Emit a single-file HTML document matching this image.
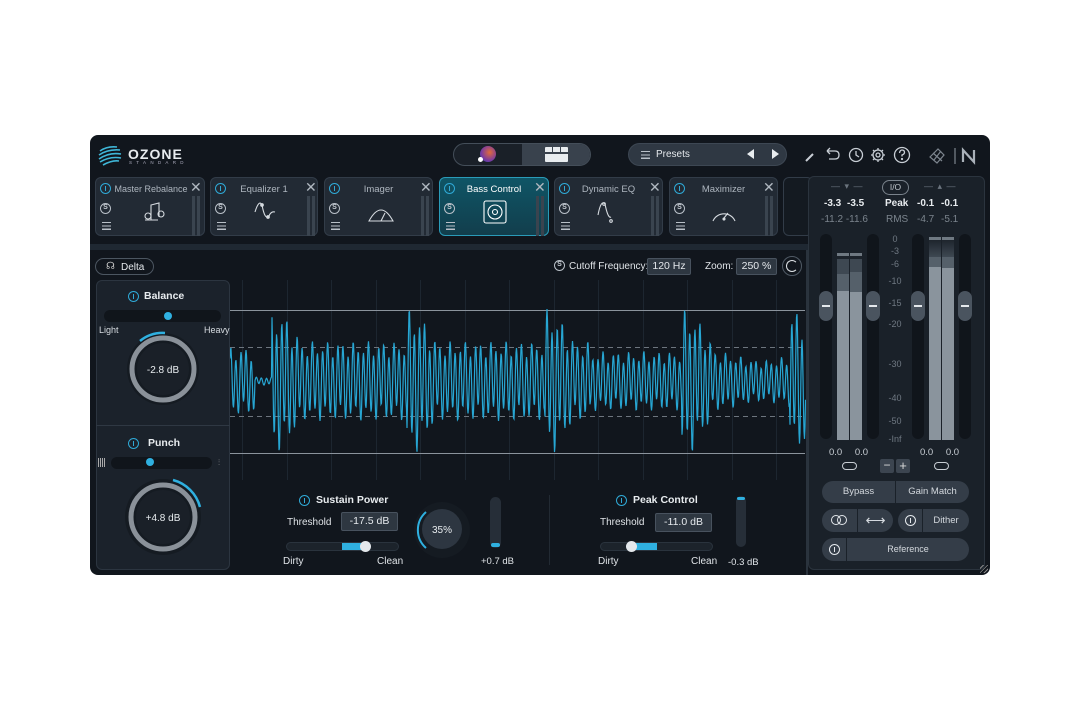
<!DOCTYPE html>
<html><head><meta charset="utf-8"><style>
*{box-sizing:border-box;margin:0;padding:0}
body{width:1080px;height:710px;background:#fff;font-family:"Liberation Sans",sans-serif;position:relative;overflow:hidden;color:#d8dde3}
.a{position:absolute}
#win{left:90px;top:135px;width:900px;height:440px;background:#11161d;border-radius:8px;overflow:hidden}
.card{position:absolute;top:177px;height:59px;background:#222a34;border:1px solid #323c48;border-radius:6px}
.card .t{position:absolute;top:6px;left:0;right:0;text-align:center;font-size:9.5px;color:#aeb6bf}
.pw{position:absolute;width:11px;height:11px;border:1.3px solid #2fa9d6;border-radius:50%}
.pw:after{content:"";position:absolute;left:3.5px;top:2px;width:1.3px;height:4.5px;background:#2fa9d6}
.s{position:absolute;width:11px;height:11px;border:1.2px solid #b9c0c8;border-radius:50%;font-size:7px;line-height:8.5px;text-align:center;color:#c8ced5;font-weight:bold}
.ls{position:absolute;width:9px;height:8px;background:repeating-linear-gradient(#b9c0c8 0 1.2px,transparent 1.2px 3.3px)}
.x{position:absolute;font-size:14px;color:#b0b8c0;line-height:12px}
.vm{position:absolute;width:3px;height:40px;background:#3a444f}
.box{position:absolute;background:#2e3741;border:1px solid #48525e;border-radius:2px;font-size:10.5px;text-align:center;color:#e4e8ec}
.lbl{position:absolute;font-size:10px;color:#e0e4e8}
.btn{position:absolute;background:#343d48;font-size:9.5px;color:#d4d9de;text-align:center}
.sc{position:absolute;left:880px;width:30px;text-align:center;font-size:9px;color:#6f7882}
</style></head><body>
<div id="win" class="a"></div>
<svg class="a" style="left:97px;top:143px" width="26" height="24" viewBox="0 0 26 24"><g stroke="#3fb7d8" stroke-width="1.6" fill="none"><path d="M3 8 Q10 3 20 4"/><path d="M2 12 Q11 6 23 7"/><path d="M2 16 Q12 9 24 11"/><path d="M3 19 Q13 13 24 15"/><path d="M6 22 Q15 17 22 18"/></g></svg>
<div class="a" style="left:128px;top:146px;font-size:14px;font-weight:bold;color:#e8ecef;letter-spacing:1px">OZONE</div>
<div class="a" style="left:129px;top:160px;font-size:4.5px;color:#aab;letter-spacing:4.3px">STANDARD</div>
<div class="a" style="left:453px;top:143px;width:138px;height:23px;border-radius:12px;background:#1a2028;border:1px solid #444e59;overflow:hidden"><div class="a" style="left:68px;top:0;width:70px;height:23px;background:#39424d"></div></div>
<div class="a" style="left:480px;top:146px;width:16px;height:16px;border-radius:50%;background:radial-gradient(circle at 60% 40%,#e06a3a,#7a3aa0 60%,#2a4ab0)"></div>
<div class="a" style="left:478px;top:157px;width:5px;height:5px;border-radius:50%;background:#fff"></div>
<div class="a" style="left:545px;top:147px;width:23px;height:15px;background:#e8ecef;border-radius:1px;border-top:5px solid #e8ecef"><div class="a" style="left:7px;top:-5px;width:1px;height:5px;background:#39424d"></div><div class="a" style="left:15px;top:-5px;width:1px;height:5px;background:#39424d"></div><div class="a" style="left:-1px;top:0;width:25px;height:1.5px;background:#39424d"></div></div>
<div class="a" style="left:628px;top:143px;width:159px;height:23px;border-radius:12px;background:#2f3843;border:1px solid #3d4753"></div>
<div class="ls" style="left:641px;top:151px"></div>
<div class="a" style="left:656px;top:149px;font-size:10px;color:#e4e8ec">Presets</div>
<div class="a" style="left:747px;top:149px;width:0;height:0;border-top:5px solid transparent;border-bottom:5px solid transparent;border-right:7px solid #e8ecef"></div>
<div class="a" style="left:772px;top:149px;width:0;height:0;border-top:5px solid transparent;border-bottom:5px solid transparent;border-left:7px solid #e8ecef"></div>
<svg class="a" style="left:803px;top:145px" width="110" height="22" viewBox="0 0 110 22" fill="none" stroke="#c8ced5" stroke-width="1.3"><path d="M3 16 L10 9" stroke-width="2"/><path d="M24 6 H32 Q36 6 36 10 Q36 14 32 14 H26"/><path d="M24 6 L27 3 M24 6 L27 9"/><circle cx="53" cy="10" r="6.5"/><path d="M53 6 V10 L56 12"/><circle cx="75" cy="10" r="5"/><circle cx="75" cy="10" r="2"/><path d="M75 3v2M75 15v2M68 10h2M80 10h2M70 5l1.5 1.5M80 15l-1.5-1.5M70 15l1.5-1.5M80 5l-1.5 1.5"/><circle cx="99" cy="10" r="7.5"/><path d="M96.5 8 Q97 5 99 5 Q101.5 5 101.5 7.5 Q101.5 9 99 10 V11.5"/><circle cx="99" cy="14" r="0.5"/></svg>
<svg class="a" style="left:928px;top:145px" width="56" height="22" viewBox="0 0 56 22" fill="none" stroke="#7d858e" stroke-width="1.2"><path d="M2 12 L10 4 L16 10 L9 18 Z M5 8 L14 16 M6 15 L13 6"/><path d="M27 3 V19"/><path d="M35 17 V5 L46 17 V5" stroke="#aab1b9" stroke-width="2.2"/></svg>
<div class="card" style="left:95px;width:110px"><div class="t" style="left:14px;right:12px;font-size:9px">Master Rebalance</div></div>
<div class="card" style="left:210px;width:108px"><div class="t">Equalizer 1</div></div>
<div class="card" style="left:324px;width:109px"><div class="t">Imager</div></div>
<div class="card" style="left:439px;width:110px;background:linear-gradient(#0f5566,#123e4c);border-color:#2a9bb8"><div class="t" style="color:#fff">Bass Control</div></div>
<div class="card" style="left:554px;width:109px"><div class="t">Dynamic EQ</div></div>
<div class="card" style="left:669px;width:109px"><div class="t">Maximizer</div></div>
<div class="card" style="left:783px;width:30px;background:#141a21"></div>
<div class="pw" style="left:100px;top:183px"></div><div class="pw" style="left:215px;top:183px"></div><div class="pw" style="left:329px;top:183px"></div><div class="pw" style="left:444px;top:183px"></div><div class="pw" style="left:559px;top:183px"></div><div class="pw" style="left:674px;top:183px"></div>
<div class="s" style="left:100px;top:203px">S</div><div class="s" style="left:215px;top:203px">S</div><div class="s" style="left:329px;top:203px">S</div><div class="s" style="left:444px;top:203px">S</div><div class="s" style="left:559px;top:203px">S</div><div class="s" style="left:674px;top:203px">S</div>
<div class="ls" style="left:102px;top:222px"></div><div class="ls" style="left:217px;top:222px"></div><div class="ls" style="left:331px;top:222px"></div><div class="ls" style="left:446px;top:222px"></div><div class="ls" style="left:561px;top:222px"></div><div class="ls" style="left:676px;top:222px"></div>
<div class="x" style="left:190px;top:181px">✕</div><div class="x" style="left:305px;top:181px">✕</div><div class="x" style="left:420px;top:181px">✕</div><div class="x" style="left:534px;top:181px">✕</div><div class="x" style="left:649px;top:181px">✕</div><div class="x" style="left:763px;top:181px">✕</div>
<div class="vm" style="left:192px;top:196px"></div><div class="vm" style="left:197px;top:196px"></div>
<div class="vm" style="left:307px;top:196px"></div><div class="vm" style="left:312px;top:196px"></div>
<div class="vm" style="left:421px;top:196px"></div><div class="vm" style="left:426px;top:196px"></div>
<div class="vm" style="left:536px;top:196px"></div><div class="vm" style="left:541px;top:196px"></div>
<div class="vm" style="left:651px;top:196px"></div><div class="vm" style="left:656px;top:196px"></div>
<div class="vm" style="left:765px;top:196px"></div><div class="vm" style="left:770px;top:196px"></div>
<svg class="a" style="left:95px;top:177px" width="700" height="60" fill="none" stroke="#d6dbe0" stroke-width="1.1">
<path d="M50 43 H63 M56 43 V28 L64 26 V40"/><circle cx="53" cy="39" r="3"/><circle cx="66" cy="37" r="3"/>
<path d="M160 35 Q164 22 167 28 Q170 44 174 39 Q176 34 180 35"/><circle cx="167" cy="28" r="1.3" fill="#d6dbe0"/><circle cx="173" cy="40" r="1.3" fill="#d6dbe0"/>
<path d="M274 44 Q286 22 298 44 Z M286 44 L290 36"/>
<rect x="389" y="24" width="22" height="22" rx="2" stroke="#fff"/><circle cx="400" cy="35" r="7" stroke="#fff"/><circle cx="400" cy="35" r="2.5" stroke="#fff"/>
<path d="M503 38 Q506 22 510 27 Q513 42 516 40"/><circle cx="509" cy="27" r="1.3"/><circle cx="516" cy="44" r="1.3"/>
<path d="M618 44 A12 12 0 0 1 640 44 M629 41 L633 36"/><circle cx="629" cy="42" r="1" fill="#d6dbe0"/>
</svg>
<div class="a" style="left:90px;top:244px;width:718px;height:6px;background:#1f2832"></div>
<div class="a" style="left:95px;top:258px;width:59px;height:17px;border:1px solid #4c5661;border-radius:9px;font-size:10px;padding:3px 0 0 25px;color:#e4e8ec">Delta</div>
<div class="a" style="left:106px;top:261px;font-size:10px;color:#ccc">☊</div>
<div class="s" style="left:554px;top:260px">S</div>
<div class="lbl" style="left:569px;top:261px">Cutoff Frequency:</div>
<div class="box" style="left:647px;top:258px;width:44px;height:17px;line-height:15px">120 Hz</div>
<div class="lbl" style="left:705px;top:261px">Zoom:</div>
<div class="box" style="left:736px;top:258px;width:41px;height:17px;line-height:15px">250 %</div>
<div class="a" style="left:782px;top:256px;width:20px;height:20px;border-radius:50%;border:1px solid #505a65"></div>
<div class="a" style="left:786px;top:260px;width:12px;height:12px;border-radius:50%;border:1.4px solid #e0e4e8;border-right-color:transparent"></div>
<svg class="a" style="left:230px;top:280px" width="578" height="200" id="wv">
<g stroke="#1d2630" stroke-width="1"><path id="grid"/></g>
<path d="M0 30.5 H575 M0 173.5 H575" stroke="#8b939c" stroke-width="1"/>
<path d="M0 67.5 H575 M0 136.5 H575" stroke="#6d757e" stroke-width="1" stroke-dasharray="5 4"/>
<path id="wp" fill="none" stroke="#27a6d3" stroke-width="1.2"/>
</svg>
<div class="a" style="left:806px;top:250px;width:2px;height:325px;background:#2a333d"></div>
<div class="a" style="left:96px;top:280px;width:134px;height:290px;background:#1b222b;border:1px solid #2c3540;border-radius:6px"></div>
<div class="a" style="left:96px;top:425px;width:134px;height:1px;background:#2f3843"></div>
<div class="pw" style="left:128px;top:291px"></div><div class="a" style="left:144px;top:290px;font-size:10.5px;font-weight:bold;color:#e8ecef">Balance</div>
<div class="a" style="left:104px;top:310px;width:117px;height:12px;border-radius:6px;background:#10151b"></div>
<div class="a" style="left:164px;top:312px;width:8px;height:8px;border-radius:50%;background:#2fb0e0"></div>
<div class="a" style="left:99px;top:325px;font-size:9px;color:#d8dde2">Light</div><div class="a" style="left:204px;top:325px;font-size:9px;color:#d8dde2">Heavy</div>
<svg class="a" style="left:120px;top:326px" width="86" height="86"><circle cx="43" cy="43" r="36" fill="#151b22"/><circle cx="43" cy="43" r="31" fill="none" stroke="#8a9199" stroke-width="5"/><circle cx="43" cy="43" r="26" fill="#1a2028"/><path d="M20 15 A36 36 0 0 1 45 7" fill="none" stroke="#2fb0e0" stroke-width="2.5"/><text x="43" y="47" fill="#e8ecef" font-size="10" text-anchor="middle" font-family="Liberation Sans">-2.8 dB</text></svg>
<div class="pw" style="left:128px;top:438px"></div><div class="a" style="left:148px;top:437px;font-size:10.5px;font-weight:bold;color:#e8ecef">Punch</div>
<div class="a" style="left:98px;top:458px;width:8px;height:9px;background:repeating-linear-gradient(90deg,#aaa 0 1px,transparent 1px 2px)"></div>
<div class="a" style="left:111px;top:457px;width:101px;height:12px;border-radius:6px;background:#10151b"></div>
<div class="a" style="left:146px;top:458px;width:8px;height:8px;border-radius:50%;background:#2fb0e0"></div>
<div class="a" style="left:218px;top:458px;font-size:8px;color:#aaa">⫶</div>
<svg class="a" style="left:118px;top:472px" width="90" height="90"><circle cx="45" cy="45" r="38" fill="#151b22"/><circle cx="45" cy="45" r="32" fill="none" stroke="#8a9199" stroke-width="5"/><circle cx="45" cy="45" r="27" fill="#1a2028"/><path d="M55 8 A38 38 0 0 1 82 35" fill="none" stroke="#2fb0e0" stroke-width="2.5"/><text x="45" y="49" fill="#e8ecef" font-size="10" text-anchor="middle" font-family="Liberation Sans">+4.8 dB</text></svg>
<div class="pw" style="left:299px;top:495px"></div><div class="a" style="left:316px;top:494px;font-size:10.5px;font-weight:bold;color:#e8ecef">Sustain Power</div>
<div class="lbl" style="left:287px;top:517px">Threshold</div>
<div class="box" style="left:341px;top:512px;width:57px;height:19px;line-height:17px">-17.5 dB</div>
<div class="a" style="left:286px;top:542px;width:113px;height:9px;border-radius:5px;background:#1c232b;border:1px solid #2a333d"></div>
<div class="a" style="left:342px;top:543px;width:22px;height:7px;background:#2fb0e0"></div>
<div class="a" style="left:360px;top:541px;width:11px;height:11px;border-radius:50%;background:#e4e8ec"></div>
<div class="lbl" style="left:283px;top:556px">Dirty</div><div class="lbl" style="left:377px;top:556px">Clean</div>
<svg class="a" style="left:412px;top:500px" width="60" height="60"><circle cx="30" cy="30" r="28" fill="#151b22"/><circle cx="30" cy="29" r="20" fill="#2d3641"/><path d="M14 12 A24 24 0 0 0 14 48" fill="none" stroke="#2fb0e0" stroke-width="2"/><text x="30" y="33" fill="#e8ecef" font-size="10" text-anchor="middle" font-family="Liberation Sans">35%</text></svg>
<div class="a" style="left:490px;top:497px;width:11px;height:51px;border-radius:6px;background:#262e38"></div>
<div class="a" style="left:491px;top:543px;width:9px;height:4px;border-radius:3px;background:#2fb0e0"></div>
<div class="lbl" style="left:481px;top:556px;font-size:9.5px">+0.7 dB</div>
<div class="a" style="left:549px;top:495px;width:1px;height:70px;background:#222a33"></div>
<div class="pw" style="left:616px;top:495px"></div><div class="a" style="left:633px;top:494px;font-size:10.5px;font-weight:bold;color:#e8ecef">Peak Control</div>
<div class="lbl" style="left:600px;top:517px">Threshold</div>
<div class="box" style="left:655px;top:513px;width:57px;height:19px;line-height:17px">-11.0 dB</div>
<div class="a" style="left:600px;top:542px;width:113px;height:9px;border-radius:5px;background:#1c232b;border:1px solid #2a333d"></div>
<div class="a" style="left:631px;top:543px;width:26px;height:7px;background:#2fb0e0"></div>
<div class="a" style="left:626px;top:541px;width:11px;height:11px;border-radius:50%;background:#e4e8ec"></div>
<div class="lbl" style="left:598px;top:556px">Dirty</div><div class="lbl" style="left:691px;top:556px">Clean</div>
<div class="a" style="left:736px;top:496px;width:10px;height:51px;border-radius:6px;background:#262e38"></div>
<div class="a" style="left:737px;top:497px;width:8px;height:3px;border-radius:3px;background:#2fb0e0"></div>
<div class="lbl" style="left:728px;top:557px;font-size:9.5px">-0.3 dB</div>
<div class="a" style="left:808px;top:176px;width:177px;height:394px;background:#1a2129;border:1px solid #2b343e;border-radius:6px"></div>
<div class="a" style="left:831px;top:181px;font-size:9px;color:#6b747e;letter-spacing:1px">— ▾ —</div>
<div class="a" style="left:924px;top:181px;font-size:9px;color:#6b747e;letter-spacing:1px">— ▴ —</div>
<div class="a" style="left:882px;top:180px;width:27px;height:15px;border:1px solid #7a838c;border-radius:8px;font-size:8.5px;text-align:center;line-height:13px;color:#c0c6cc">I/O</div>
<div class="a" style="left:824px;top:198px;font-size:10px;font-weight:bold;color:#e8ecef;word-spacing:3px">-3.3 -3.5</div>
<div class="a" style="left:885px;top:198px;font-size:10px;font-weight:bold;color:#e8ecef">Peak</div>
<div class="a" style="left:917px;top:198px;font-size:10px;font-weight:bold;color:#e8ecef;word-spacing:4px">-0.1 -0.1</div>
<div class="a" style="left:821px;top:214px;font-size:10px;color:#7b848d">-11.2 -11.6</div>
<div class="a" style="left:886px;top:214px;font-size:10px;color:#7b848d">RMS</div>
<div class="a" style="left:917px;top:214px;font-size:10px;color:#7b848d;word-spacing:4px">-4.7 -5.1</div>
<div class="a" style="left:820px;top:234px;width:12px;height:205px;border-radius:6px;background:#10151b"></div>
<div class="a" style="left:867px;top:234px;width:12px;height:205px;border-radius:6px;background:#10151b"></div>
<div class="a" style="left:912px;top:234px;width:12px;height:205px;border-radius:6px;background:#10151b"></div>
<div class="a" style="left:959px;top:234px;width:12px;height:205px;border-radius:6px;background:#10151b"></div>
<div class="a" style="left:837px;top:253px;width:12px;height:187px;background:linear-gradient(#1c232b 0 6px,#3e4852 6px 21px,#55606a 21px 38px,#8a949d 38px)"></div>
<div class="a" style="left:850px;top:253px;width:12px;height:187px;background:linear-gradient(#1c232b 0 6px,#3e4852 6px 19px,#55606a 19px 39px,#8a949d 39px)"></div>
<div class="a" style="left:837px;top:253px;width:12px;height:3px;background:#6f7982"></div><div class="a" style="left:850px;top:253px;width:12px;height:3px;background:#6f7982"></div>
<div class="a" style="left:929px;top:237px;width:12px;height:203px;background:linear-gradient(#1c232b 0 2px,#3e4852 20px,#55606a 20px 30px,#8a949d 30px)"></div>
<div class="a" style="left:942px;top:237px;width:12px;height:203px;background:linear-gradient(#1c232b 0 2px,#3e4852 20px,#55606a 20px 31px,#8a949d 31px)"></div>
<div class="a" style="left:929px;top:237px;width:12px;height:3px;background:#6f7982"></div><div class="a" style="left:942px;top:237px;width:12px;height:3px;background:#6f7982"></div>
<div class="a" style="left:819px;top:291px;width:14px;height:30px;border-radius:7px;background:#4a545f"><div class="a" style="left:3px;top:14px;width:8px;height:2px;background:#e4e8ec"></div></div>
<div class="a" style="left:866px;top:291px;width:14px;height:30px;border-radius:7px;background:#4a545f"><div class="a" style="left:3px;top:14px;width:8px;height:2px;background:#e4e8ec"></div></div>
<div class="a" style="left:911px;top:291px;width:14px;height:30px;border-radius:7px;background:#4a545f"><div class="a" style="left:3px;top:14px;width:8px;height:2px;background:#e4e8ec"></div></div>
<div class="a" style="left:958px;top:291px;width:14px;height:30px;border-radius:7px;background:#4a545f"><div class="a" style="left:3px;top:14px;width:8px;height:2px;background:#e4e8ec"></div></div>
<div class="sc" style="top:234px">0</div><div class="sc" style="top:246px">-3</div><div class="sc" style="top:259px">-6</div><div class="sc" style="top:276px">-10</div><div class="sc" style="top:298px">-15</div><div class="sc" style="top:319px">-20</div><div class="sc" style="top:359px">-30</div><div class="sc" style="top:393px">-40</div><div class="sc" style="top:416px">-50</div><div class="sc" style="top:434px">-Inf</div>
<div class="a" style="left:829px;top:447px;font-size:9.5px;color:#c8ced4;word-spacing:10px">0.0 0.0</div>
<div class="a" style="left:920px;top:447px;font-size:9.5px;color:#c8ced4;word-spacing:10px">0.0 0.0</div>
<div class="a" style="left:842px;top:462px;width:15px;height:8px;border:1.3px solid #c8ced4;border-radius:4px"></div>
<div class="a" style="left:934px;top:462px;width:15px;height:8px;border:1.3px solid #c8ced4;border-radius:4px"></div>
<div class="a" style="left:880px;top:459px;width:14px;height:14px;background:#3c4550;border-radius:2px;color:#ddd;font-size:12px;text-align:center;line-height:13px">−</div>
<div class="a" style="left:896px;top:459px;width:14px;height:14px;background:#3c4550;border-radius:2px;color:#ddd;font-size:13px;text-align:center;line-height:13px">+</div>
<div class="btn" style="left:822px;top:481px;width:73px;height:22px;border-radius:11px 0 0 11px;line-height:22px">Bypass</div>
<div class="btn" style="left:896px;top:481px;width:73px;height:22px;border-radius:0 11px 11px 0;line-height:22px">Gain Match</div>
<div class="btn" style="left:822px;top:509px;width:35px;height:23px;border-radius:12px 0 0 12px"></div>
<div class="btn" style="left:858px;top:509px;width:35px;height:23px;border-radius:0 12px 12px 0;line-height:22px;font-size:14px">⟷</div>
<div class="a" style="left:831px;top:515px;width:10px;height:10px;border:1.2px solid #e4e8ec;border-radius:50%"></div><div class="a" style="left:837px;top:515px;width:10px;height:10px;border:1.2px solid #e4e8ec;border-radius:50%"></div>
<div class="btn" style="left:898px;top:509px;width:24px;height:23px;border-radius:12px 0 0 12px"></div>
<div class="btn" style="left:923px;top:509px;width:46px;height:23px;border-radius:0 12px 12px 0;line-height:23px">Dither</div>
<div class="btn" style="left:822px;top:538px;width:24px;height:23px;border-radius:12px 0 0 12px"></div>
<div class="btn" style="left:847px;top:538px;width:122px;height:23px;border-radius:0 12px 12px 0;line-height:23px;font-size:9px">Reference</div>
<div class="a" style="left:905px;top:515px;width:11px;height:11px;border:1.3px solid #e4e8ec;border-radius:50%"><div class="a" style="left:3.5px;top:2px;width:1.5px;height:5px;background:#e4e8ec"></div></div>
<div class="a" style="left:829px;top:544px;width:11px;height:11px;border:1.3px solid #e4e8ec;border-radius:50%"><div class="a" style="left:3.5px;top:2px;width:1.5px;height:5px;background:#e4e8ec"></div></div>
<div class="a" style="left:980px;top:565px;width:8px;height:8px;background:repeating-linear-gradient(135deg,transparent 0 2px,#888 2px 3px)"></div>
<script>
var g="";for(var x=12;x<578;x+=44.5){g+="M"+Math.round(x)+".5 0V220 ";}
document.getElementById("grid").setAttribute("d",g);
var bursts=[42,177,315,452,560];
function env(x){
 if(x<25)return 34; if(x<42)return 4;
 var a=0;
 for(var i=0;i<bursts.length;i++){var b=bursts[i];if(x>=b){var d=x-b;var base=40;
  if(i==2&&d>45)base=30; if(i==3&&d>30)base=32-Math.min(14,(d-30)*0.25)+Math.max(0,(d-70)*0.2);
  var v=d<10?72:(d<30?72-(d-10)/20*(72-base):base); a=v;}}
 return a;}
var p="",ph=0;
for(var x=0;x<576;x+=0.5){var e=env(x);
 ph+=2*Math.PI/5.1*0.5;
 var w=0.8*Math.sin(ph)+0.2*Math.sin(ph*0.37+1.3);
 var y=101-e*w;
 p+=(x==0?"M":" L")+x+" "+y.toFixed(1);}
document.getElementById("wp").setAttribute("d",p);
</script>
</body></html>
